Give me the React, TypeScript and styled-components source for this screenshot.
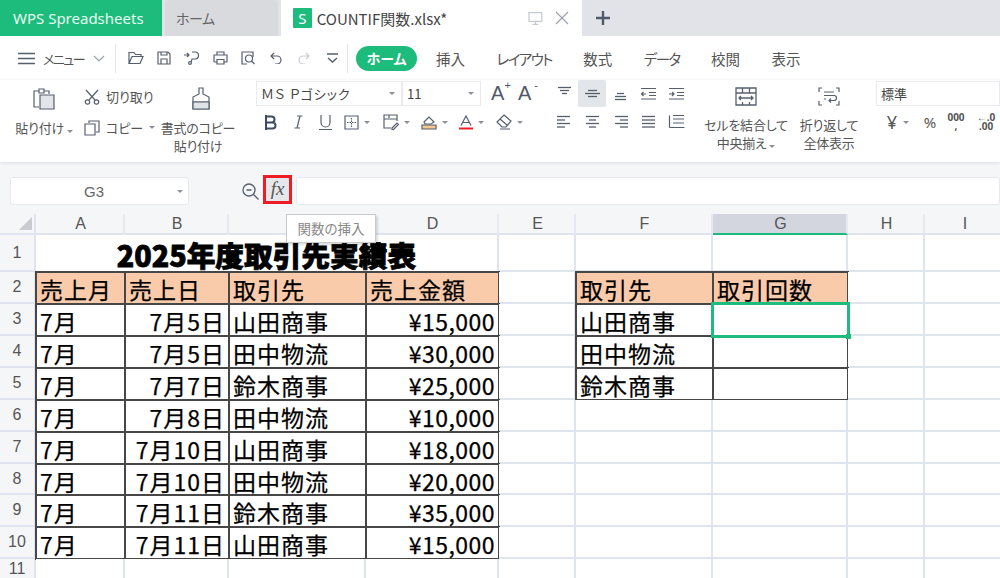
import React from "react";
import styled, { createGlobalStyle } from "styled-components";

const UI_FONT = `"Noto Sans CJK JP", "Noto Sans", sans-serif`;
const GREEN = "#1dbb7c";
const ICON = "#565f6e";
const GRID_LINE = "#e0e4ee";
const TABLE_LINE = "#474747";

const GlobalStyle = createGlobalStyle`
  html, body { margin: 0; padding: 0; background: #fff; }
  body { font-family: ${UI_FONT}; font-feature-settings: "palt"; }
`;

const Page = styled.div`
  width: 1000px;
  height: 578px;
  overflow: hidden;
  display: flex;
  flex-direction: column;
  position: relative;
  background: #fff;
`;

/* tabs */
const TabBar = styled.div`
  display: flex;
  flex: none;
  height: 36px;
  background: #e1e3e8;
`;

const BrandTab = styled.div`
  width: 162px;
  padding-left: 13px;
  box-sizing: border-box;
  background: ${GREEN};
  color: #e6fbf1;
  font: 15px/36px "Noto Sans", sans-serif;
`;

const HomeTab = styled.div`
  width: 113px;
  margin: 0 3px;
  padding-left: 11px;
  box-sizing: border-box;
  background: #d9dade;
  border-radius: 3px 3px 0 0;
  color: #666;
  font-size: 14px;
  letter-spacing: -0.5px;
  line-height: 36px;
`;

const FileTab = styled.div`
  width: 301px;
  display: flex;
  align-items: center;
  padding-left: 12px;
  box-sizing: border-box;
  background: #fff;
  color: #444;
`;

const FileBadge = styled.span`
  width: 19px;
  height: 20px;
  margin-right: 5px;
  background: ${GREEN};
  border-radius: 1px;
  color: #fff;
  font: 15px/20px "Noto Sans", sans-serif;
  text-align: center;
`;

const FileName = styled.span`
  width: 214px;
  font: 15px "Noto Sans CJK JP", sans-serif;
`;

const NewTab = styled.div`
  margin-left: 14px;
  display: flex;
  align-items: center;
`;

/* menu row */
const MenuRow = styled.div`
  height: 44px;
  flex: none;
  display: flex;
  align-items: center;
  background: #fff;
`;

const MenuLabel = styled.span`
  width: 50px;
  margin-left: 8px;
  font-size: 13px;
  color: #555;
  letter-spacing: -1.5px;
`;

const QuickSlot = styled.span<{ $w: number }>`
  width: ${({ $w }) => $w}px;
  display: flex;
  justify-content: center;
`;

const Divider = styled.span<{ $ml: number; $mr: number }>`
  width: 1px;
  height: 29px;
  margin: 0 ${({ $mr }) => $mr}px 0 ${({ $ml }) => $ml}px;
  background: #e3e5e9;
`;

const ActivePill = styled.span`
  width: 61px;
  height: 25px;
  margin-right: 19px;
  border-radius: 13px;
  background: ${GREEN};
  color: #fff;
  font-size: 14px;
  font-weight: 700;
  line-height: 25px;
  text-align: center;
`;

const MenuTab = styled.span<{ $kana?: boolean }>`
  margin-right: 31.5px;
  font-size: 14.5px;
  letter-spacing: ${({ $kana }) => ($kana ? "-1.6px" : "0")};
  color: #555;
`;

/* ribbon */
const Ribbon = styled.div`
  height: 82px;
  flex: none;
  display: flex;
  align-items: flex-start;
  background: #fff;
  box-shadow: 0 1px 3px rgba(60, 70, 90, 0.14);
  position: relative;
  z-index: 2;
`;

const Group = styled.div<{ $w: number; $ml?: number }>`
  width: ${({ $w }) => $w}px;
  margin-left: ${({ $ml }) => $ml ?? 0}px;
  flex: none;
  display: flex;
  flex-direction: column;
`;

const BigGroup = styled(Group)`
  align-items: center;
  padding-top: 7px;
  color: #555;
  font-size: 13px;
  line-height: 18px;
  text-align: center;
`;

const BigLabel = styled.div<{ $top: number }>`
  margin-top: ${({ $top }) => $top}px;
  white-space: nowrap;
  letter-spacing: -0.2px;
`;

const BrushSlot = styled.span`
  display: flex;
  margin-left: 6px;
`;

const ClipRow = styled.div<{ $top: number }>`
  display: flex;
  align-items: center;
  gap: 6px;
  margin-top: ${({ $top }) => $top}px;
  font-size: 13px;
  color: #555;
`;

const Select = styled.div<{ $w: number; $spaced?: boolean }>`
  width: ${({ $w }) => $w}px;
  height: 25px;
  padding: 0 6px 0 4px;
  box-sizing: border-box;
  display: flex;
  align-items: center;
  justify-content: space-between;
  border: 1px solid #e9ebee;
  color: #444;
  font-size: 13px;
  letter-spacing: ${({ $spaced }) => ($spaced ? "1px" : "0")};
  white-space: nowrap;
`;

const FontRow = styled.div`
  display: flex;
  align-items: center;
  margin-top: 1px;
`;

const ToolRow = styled.div`
  display: flex;
  height: 26px;
  margin-top: 3px;
`;

const Tool = styled.span<{ $w: number }>`
  width: ${({ $w }) => $w}px;
  display: flex;
  align-items: center;
  justify-content: center;
  gap: 5px;
  color: #3f4a5c;
`;

const GrowLetter = styled.span`
  font: 20px "Liberation Sans", sans-serif;
  color: #505968;
  margin-left: 10px;
  width: 17px;
  position: relative;
`;

const Super = styled.span`
  position: absolute;
  top: -3px;
  right: -3px;
  font-size: 11px;
`;

const AlignGrid = styled.div`
  display: grid;
  grid-template-columns: repeat(5, 28px);
  grid-auto-rows: 27px;
  row-gap: 1px;
`;

const AlignCell = styled.span<{ $on?: boolean }>`
  display: flex;
  align-items: center;
  justify-content: center;
  border-radius: 2px;
  background: ${({ $on }) => ($on ? "#e2e5e9" : "transparent")};
`;

const NumberTools = styled.div`
  display: flex;
  align-items: center;
  height: 26px;
  margin-top: 3px;
  color: #555;
`;

const NumTool = styled.span<{ $w: number }>`
  width: ${({ $w }) => $w}px;
  display: flex;
  align-items: center;
  justify-content: center;
  gap: 6px;
  font: 15px "Noto Sans", sans-serif;
  white-space: pre;
`;

const YenSign = styled.span`
  font-size: 18px;
`;

const TinyStack = styled.span`
  font: 700 10px/9px "Noto Sans", sans-serif;
  text-align: center;
  white-space: pre;
`;

/* formula bar */
const FormulaBar = styled.div`
  height: 52px;
  flex: none;
  box-sizing: border-box;
  padding: 15px 0 9px 10px;
  display: flex;
  align-items: center;
  background: #f5f6f8;
`;

const NameBox = styled.div`
  width: 179px;
  height: 28px;
  box-sizing: border-box;
  padding-right: 5px;
  display: flex;
  align-items: center;
  background: #fff;
  border: 1px solid #e6e8ec;
  border-radius: 3px;
`;

const NameText = styled.span`
  flex: 1;
  text-align: center;
  font: 15px "Liberation Sans", sans-serif;
  color: #666;
`;

const ZoomSlot = styled.span`
  margin: 0 4px 0 53px;
  display: flex;
`;

const FxButton = styled.span`
  width: 29px;
  height: 29px;
  margin-top: -3px;
  box-sizing: border-box;
  border: 3px solid #ee1c25;
  background: #e5e7ea;
  color: #555;
  font: italic 19px/22px "Liberation Serif", serif;
  text-align: center;
`;

const FormulaInput = styled.div`
  flex: 1;
  height: 28px;
  margin-left: 4px;
  box-sizing: border-box;
  background: #fff;
  border: 1px solid #e6e8ec;
  border-radius: 3px;
`;

const Tooltip = styled.div`
  position: absolute;
  left: 286px;
  top: 214px;
  width: 90px;
  height: 29px;
  box-sizing: border-box;
  z-index: 5;
  background: #fff;
  border: 1px solid #c9c9c9;
  box-shadow: 2px 2px 2px rgba(0, 0, 0, 0.14);
  color: #888;
  font-size: 13.5px;
  line-height: 27px;
  text-align: center;
`;

/* sheet */
const Sheet = styled.div`
  flex: none;
  display: grid;
  grid-template-columns: 36px 89px 104px 137px 133px 77px 137px 135px 77px 80px;
  grid-template-rows: 21px 37px 32px 32px 32px 32px 32px 32px 31px 32px 32px 22px;
  background: #fff;
`;

const Corner = styled.div`
  background: #f5f6f8;
  border-right: 2px solid ${GRID_LINE};
  border-bottom: 2px solid ${GRID_LINE};
  box-sizing: border-box;
  display: flex;
  padding: 3px 0 0 19px;
`;

const ColHead = styled.div<{ $active?: boolean }>`
  box-sizing: border-box;
  padding-left: 2px;
  background: ${({ $active }) => ($active ? "#d3d6de" : "#f5f6f8")};
  border-right: 2px solid #e6e9f0;
  border-bottom: 2px solid ${({ $active }) => ($active ? GREEN : GRID_LINE)};
  color: #555;
  font: 16px/20px "Liberation Sans", sans-serif;
  text-align: center;
`;

const RowHead = styled.div`
  box-sizing: border-box;
  display: flex;
  align-items: center;
  justify-content: center;
  background: #f5f6f8;
  border-right: 2px solid ${GRID_LINE};
  border-bottom: 2px solid ${GRID_LINE};
  color: #555;
  font: 16px "Liberation Sans", sans-serif;
`;

const Cell = styled.div<{
  $boxed?: boolean;
  $head?: boolean;
  $right?: boolean;
  $money?: boolean;
  $selected?: boolean;
}>`
  box-sizing: border-box;
  position: relative;
  display: flex;
  align-items: center;
  justify-content: ${({ $right }) => ($right ? "flex-end" : "flex-start")};
  padding: 2px 4px 0;
  white-space: nowrap;
  color: #000;
  font-size: 23px;
  letter-spacing: ${({ $money }) => ($money ? "0.45px" : "1px")};
  -webkit-text-stroke: 0.25px #000;
  font-feature-settings: normal;
  background: ${({ $head }) => ($head ? "#f9cbaa" : "#fff")};
  border-right: ${({ $boxed }) => ($boxed ? "none" : `2px solid ${GRID_LINE}`)};
  border-bottom: ${({ $boxed }) => ($boxed ? "none" : `2px solid ${GRID_LINE}`)};
  outline: ${({ $boxed, $selected }) =>
    $selected ? `3px solid ${GREEN}` : $boxed ? `2px solid ${TABLE_LINE}` : "none"};
  outline-offset: -1px;
  z-index: ${({ $selected }) => ($selected ? 1 : 0)};
`;

const TitleCell = styled.div`
  grid-column: span 4;
  box-sizing: border-box;
  display: flex;
  align-items: center;
  justify-content: center;
  padding-top: 1px;
  border-right: 2px solid ${GRID_LINE};
  color: #000;
  font-size: 28.7px;
  font-weight: 900;
  font-feature-settings: normal;
  -webkit-text-stroke: 0.8px #000;
  white-space: nowrap;
`;

const FillHandle = styled.span`
  position: absolute;
  right: -3px;
  bottom: -3px;
  width: 5px;
  height: 5px;
  background: ${GREEN};
`;

type GlyphProps = { w: number; h?: number; color?: string; sw?: number; children: React.ReactNode };

const Glyph = ({ w, h = w, color = ICON, sw = 1.2, children }: GlyphProps) => (
  <svg width={w} height={h} viewBox={`0 0 ${w} ${h}`} fill="none" stroke={color} strokeWidth={sw}>
    {children}
  </svg>
);

const Caret = () => (
  <svg width="6" height="3" viewBox="0 0 6 3">
    <path d="M0 0h6L3 3z" fill="#8a8f98" />
  </svg>
);

const Lines = ({ rows }: { rows: number[][] }) => (
  <Glyph w={17} h={15} sw={1.3}>
    {rows.map(([x1, x2, y]) => (
      <path key={`${x1}-${y}`} d={`M${x1} ${y}H${x2}`} />
    ))}
  </Glyph>
);

const ALIGN_ROWS: React.ReactNode[] = [
  <Lines rows={[[2, 15, 1.5], [4, 13, 4.5], [6, 11, 7.5]]} />,
  <Lines rows={[[4, 13, 4.5], [1, 16, 7.5], [4, 13, 10.5]]} />,
  <Lines rows={[[5, 12, 7.5], [3, 14, 10.5], [3, 14, 13.5]]} />,
  <Glyph w={17} h={15}>
    <path d="M1 2.5h15M9 6.5h7M9 9.5h7M1 13h15M6 8H1.5M3.5 6 1.5 8l2 2" />
  </Glyph>,
  <Glyph w={17} h={15}>
    <path d="M1 2.5h15M9 6.5h7M9 9.5h7M1 13h15M1 8h5M4 6l2 2-2 2" />
  </Glyph>,
  <Lines rows={[[1, 14, 2.5], [1, 9, 6], [1, 14, 9.5], [1, 9, 13]]} />,
  <Lines rows={[[2, 15, 2.5], [5, 12, 6], [2, 15, 9.5], [5, 12, 13]]} />,
  <Lines rows={[[3, 16, 2.5], [8, 16, 6], [3, 16, 9.5], [8, 16, 13]]} />,
  <Lines rows={[[2, 15, 2.5], [2, 15, 6], [2, 15, 9.5], [2, 15, 13]]} />,
  <Glyph w={17} h={15}>
    <path d="M1.5 1.5v12M1.5 13.5h15M5 1.5h11M5 5h11M5 9h11" />
  </Glyph>,
];

const COLUMNS = ["A", "B", "C", "D", "E", "F", "G", "H", "I"];

const SALES = [
  ["7月", "7月5日", "山田商事", "¥15,000"],
  ["7月", "7月5日", "田中物流", "¥30,000"],
  ["7月", "7月7日", "鈴木商事", "¥25,000"],
  ["7月", "7月8日", "田中物流", "¥10,000"],
  ["7月", "7月10日", "山田商事", "¥18,000"],
  ["7月", "7月10日", "田中物流", "¥20,000"],
  ["7月", "7月11日", "鈴木商事", "¥35,000"],
  ["7月", "7月11日", "山田商事", "¥15,000"],
];

const CLIENTS = ["山田商事", "田中物流", "鈴木商事"];

const Blank = ({ n }: { n: number }) => (
  <>
    {Array.from({ length: n }, (_, i) => (
      <Cell key={i} />
    ))}
  </>
);

const App = () => {
  return (
    <Page>
      <GlobalStyle />
      <TabBar>
        <BrandTab>WPS Spreadsheets</BrandTab>
        <HomeTab>ホーム</HomeTab>
        <FileTab>
          <FileBadge>S</FileBadge>
          <FileName>COUNTIF関数.xlsx*</FileName>
          <Glyph w={15} h={15} color="#c4cad2">
            <path d="M1 1.5h13v9H1zM7.5 10.5v3M4.5 13.5h6" />
          </Glyph>
          <QuickSlot $w={40}>
            <Glyph w={14} color="#9aa1ab">
              <path d="M1 1l12 12M13 1 1 13" />
            </Glyph>
          </QuickSlot>
        </FileTab>
        <NewTab>
          <Glyph w={14} color="#505a6b" sw={2.4}>
            <path d="M7 0v14M0 7h14" />
          </Glyph>
        </NewTab>
      </TabBar>

      <MenuRow>
        <QuickSlot $w={18} />
        <Glyph w={17} h={13} sw={1.3}>
          <path d="M0 1.5h17M0 6.5h17M0 11.5h17" />
        </Glyph>
        <MenuLabel>メニュー</MenuLabel>
        <Glyph w={12} h={7} color="#9aa1ab">
          <path d="M1 1l5 5 5-5" />
        </Glyph>
        <Divider $ml={10} $mr={6} />
        <QuickSlot $w={28}>
          <Glyph w={16} h={14}>
            <path d="M1 12.5V1.5h5l1.5 2H13v2M1 12.5h11l3-7H4z" />
          </Glyph>
        </QuickSlot>
        <QuickSlot $w={28}>
          <Glyph w={14}>
            <path d="M1 1h10l2 2v10H1zM4 13V8h6v5M4 1v3h6V1" />
          </Glyph>
        </QuickSlot>
        <QuickSlot $w={28}>
          <Glyph w={16} h={14}>
            <path d="M8 1h3a3.5 3.5 0 0 1 0 7H8l-1 3M0 4h5M3 2l2 2-2 2" />
            <circle cx="6" cy="12" r="1.4" />
          </Glyph>
        </QuickSlot>
        <QuickSlot $w={28}>
          <Glyph w={15} h={14}>
            <path d="M4 4V1h7v3M1 11V4h13v7h-3M4 11H1M4 8.5h7V13H4z" />
          </Glyph>
        </QuickSlot>
        <QuickSlot $w={28}>
          <Glyph w={15} h={14}>
            <path d="M6 13H1V1h11v5" />
            <circle cx="8" cy="7.5" r="3.5" />
            <path d="M10.5 10l3 3" />
          </Glyph>
        </QuickSlot>
        <QuickSlot $w={28}>
          <Glyph w={12}>
            <path d="M4 1 1 4l3 3M1 4h6a4 4 0 0 1 0 8H5" />
          </Glyph>
        </QuickSlot>
        <QuickSlot $w={28}>
          <Glyph w={12} color="#c8ccd2">
            <path d="M8 1l3 3-3 3M11 4H5a4 4 0 0 0 0 8h2" />
          </Glyph>
        </QuickSlot>
        <QuickSlot $w={28}>
          <Glyph w={13} h={10} sw={1.4}>
            <path d="M1 1h11M2 5l4.500 4L11 5" />
          </Glyph>
        </QuickSlot>
        <Divider $ml={1} $mr={8} />
        <ActivePill>ホーム</ActivePill>
        <MenuTab>挿入</MenuTab>
        <MenuTab $kana>レイアウト</MenuTab>
        <MenuTab>数式</MenuTab>
        <MenuTab $kana>データ</MenuTab>
        <MenuTab>校閲</MenuTab>
        <MenuTab>表示</MenuTab>
      </MenuRow>

      <Ribbon>
        <BigGroup $w={76} $ml={6}>
          <Glyph w={22} h={23}>
            <path d="M6 4H1v16h5M16 7V4h-5M6 2h5v4H6z" />
            <path d="M7 8h14v14H7z" fill="#e2e5ea" />
          </Glyph>
          <BigLabel $top={9}>
            貼り付け <Caret />
          </BigLabel>
        </BigGroup>
        <Group $w={72} $ml={2}>
          <ClipRow $top={7}>
            <Glyph w={16} h={16}>
              <circle cx="3.500" cy="13" r="2.200" />
              <circle cx="12.500" cy="13" r="2.200" />
              <path d="M5 11 14 1M11 11 2 1" />
            </Glyph>
            <span>切り取り</span>
          </ClipRow>
          <ClipRow $top={12}>
            <Glyph w={16} h={16}>
              <path d="M5 3V1h10v11h-3M1 4h10v11H1z" />
            </Glyph>
            <span>コピー</span>
            <Caret />
          </ClipRow>
        </Group>
        <BigGroup $w={84}>
          <BrushSlot>
            <Glyph w={20} h={23}>
              <path d="M8 1h4v6l6 3v12H2V10l6-3zM2 15h16" />
              <path d="M2 15h16v7H2z" fill="#dfe2e7" />
            </Glyph>
          </BrushSlot>
          <BigLabel $top={9}>書式のコピー</BigLabel>
          <BigLabel $top={0}>貼り付け</BigLabel>
        </BigGroup>
        <Group $w={294} $ml={16}>
          <FontRow>
            <Select $w={146} $spaced>
              <span>ＭＳ Ｐゴシック</span>
              <Caret />
            </Select>
            <Select $w={79}>
              <span>11</span>
              <Caret />
            </Select>
            <GrowLetter>
              A<Super>+</Super>
            </GrowLetter>
            <GrowLetter>
              A<Super>-</Super>
            </GrowLetter>
          </FontRow>
          <ToolRow>
            <Tool $w={28}>
              <Glyph w={13} h={15} color="#3f4a5c" sw={2}>
                <path d="M2 1.500h5.500a3 3 0 0 1 0 6H2zM2 7.500h6.500a3 3 0 0 1 0 6H2zM2 0v15" />
              </Glyph>
            </Tool>
            <Tool $w={28}>
              <Glyph w={9} h={14}>
                <path d="M3 1h5.500M.5 13H6M6 1 3 13" />
              </Glyph>
            </Tool>
            <Tool $w={26}>
              <Glyph w={13} h={15}>
                <path d="M2 0v7.500a4.500 4.500 0 0 0 9 0V0M0 14.500h13" />
              </Glyph>
            </Tool>
            <Tool $w={38}>
              <Glyph w={15}>
                <path d="M1 1h13v13H1z" />
                <path d="M7.500 3v9M3 7.500h9" strokeDasharray="1.500 1" />
              </Glyph>
              <Caret />
            </Tool>
            <Tool $w={40}>
              <Glyph w={16}>
                <path d="M8 14H1V1h13v6M6 1v3M1 5h13" />
                <path d="M9 14l5-5 1.500 1.500-5 5H9z" />
              </Glyph>
              <Caret />
            </Tool>
            <Tool $w={36}>
              <Glyph w={16}>
                <path d="M3 8l5-5 5 5-3 2H4z" />
                <path d="M1 11h14v4H1z" fill="#f4c893" />
              </Glyph>
              <Caret />
            </Tool>
            <Tool $w={38}>
              <Glyph w={14} h={15}>
                <path d="M2 10.500 7 1l5 9.500M4 7.500h6" />
                <path d="M0 13.500h14" stroke="#ee1c25" strokeWidth={2} />
              </Glyph>
              <Caret />
            </Tool>
            <Tool $w={38}>
              <Glyph w={16}>
                <path d="M8 1l7 6-5 6H6L1 8zM4 5l7 6M4 15h10" />
              </Glyph>
              <Caret />
            </Tool>
          </ToolRow>
        </Group>
        <Group $w={140}>
          <AlignGrid>
            {ALIGN_ROWS.map((icon, i) => (
              <AlignCell key={i} $on={i === 1}>
                {icon}
              </AlignCell>
            ))}
          </AlignGrid>
        </Group>
        <BigGroup $w={86} $ml={13}>
          <Glyph w={22} h={19} sw={1.3}>
            <path d="M1 1h20v17H1zM1 6h20M7.500 1v5M14.500 1v5M7.500 15v3M14.500 15v3" />
            <path d="M4 11h14M6 9l-2 2 2 2M16 9l2 2-2 2" />
          </Glyph>
          <BigLabel $top={10}>セルを結合して</BigLabel>
          <BigLabel $top={0}>
            中央揃え <Caret />
          </BigLabel>
        </BigGroup>
        <BigGroup $w={70} $ml={5}>
          <Glyph w={22} h={19}>
            <path d="M4 1H1v4M18 1h3v4M4 18H1v-4M18 18h3v-4M6 5h10M6 8.500h10a2.500 2.500 0 0 1 0 5h-5M13 11.500l-2 2 2 2M6 12h2" />
          </Glyph>
          <BigLabel $top={10}>折り返して</BigLabel>
          <BigLabel $top={0}>全体表示</BigLabel>
        </BigGroup>
        <Group $w={124} $ml={12}>
          <FontRow>
            <Select $w={140}>
              <span>標準</span>
            </Select>
          </FontRow>
          <NumberTools>
            <NumTool $w={44}>
              <YenSign>¥</YenSign> <Caret />
            </NumTool>
            <NumTool $w={20}>%</NumTool>
            <NumTool $w={32}>
              <TinyStack>{"000\n,"}</TinyStack>
            </NumTool>
            <NumTool $w={28}>
              <TinyStack>{"←.0\n.00"}</TinyStack>
            </NumTool>
          </NumberTools>
        </Group>
      </Ribbon>

      <FormulaBar>
        <NameBox>
          <NameText>G3</NameText>
          <Caret />
        </NameBox>
        <ZoomSlot>
          <Glyph w={17} h={17} sw={1.3}>
            <circle cx="7" cy="7" r="6" />
            <path d="M4.500 7h5M11.500 11.500l5 5" />
          </Glyph>
        </ZoomSlot>
        <FxButton>fx</FxButton>
        <FormulaInput />
      </FormulaBar>

      <Tooltip>関数の挿入</Tooltip>

      <Sheet>
        <Corner>
          <svg width="13" height="13" viewBox="0 0 13 13">
            <path d="M13 0v13H0z" fill="#c8cbd0" />
          </svg>
        </Corner>
        {COLUMNS.map((c) => (
          <ColHead key={c} $active={c === "G"}>
            {c}
          </ColHead>
        ))}

        <RowHead>1</RowHead>
        <TitleCell>2025年度取引先実績表</TitleCell>
        <Blank n={5} />

        <RowHead>2</RowHead>
        {["売上月", "売上日", "取引先", "売上金額"].map((t) => (
          <Cell key={t} $boxed $head>
            {t}
          </Cell>
        ))}
        <Cell />
        <Cell $boxed $head>
          取引先
        </Cell>
        <Cell $boxed $head>
          取引回数
        </Cell>
        <Blank n={2} />

        {SALES.map((row, i) => (
          <React.Fragment key={i}>
            <RowHead>{i + 3}</RowHead>
            <Cell $boxed>{row[0]}</Cell>
            <Cell $boxed $right>
              {row[1]}
            </Cell>
            <Cell $boxed>{row[2]}</Cell>
            <Cell $boxed $right $money>
              {row[3]}
            </Cell>
            <Cell />
            {i < CLIENTS.length ? (
              <>
                <Cell $boxed>{CLIENTS[i]}</Cell>
                <Cell $boxed $selected={i === 0}>
                  {i === 0 && <FillHandle />}
                </Cell>
              </>
            ) : (
              <Blank n={2} />
            )}
            <Blank n={2} />
          </React.Fragment>
        ))}

        <RowHead>11</RowHead>
        <Blank n={9} />
      </Sheet>
    </Page>
  );
};

export default App;
